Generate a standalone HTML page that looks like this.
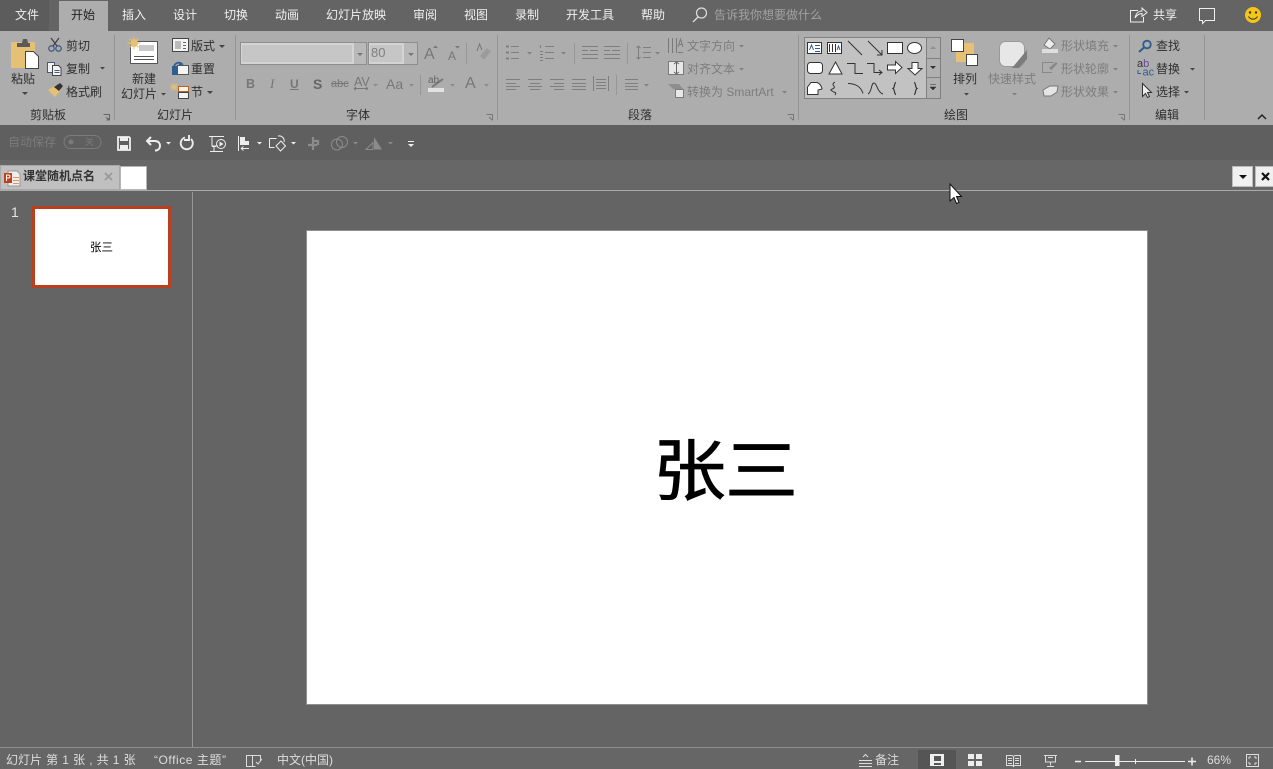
<!DOCTYPE html>
<html lang="zh-CN"><head><meta charset="utf-8"><title>PowerPoint</title>
<style>
html,body{margin:0;padding:0;width:1273px;height:769px;overflow:hidden;background:#646464}
body{position:relative;font-family:"Liberation Sans","Noto Sans CJK SC",sans-serif;font-size:12px;color:#2b2b2b}
div{position:absolute}
span.t{position:absolute;z-index:2}
.t{white-space:nowrap;line-height:16px;font-family:"Noto Sans CJK SC","Liberation Sans",sans-serif;font-size:12px}
.w{color:#f0f0f0}.g{color:#7d7d7d}.d{color:#2f2f2f}.q{color:#808080}
.s{font-family:"Liberation Sans","Noto Sans CJK SC",sans-serif;color:#ddd}
svg{position:absolute;left:0;top:0;z-index:1}
</style></head><body>
<div style="left:0;top:0;width:1273px;height:31px;background:#646464"></div>
<div style="left:0;top:0;width:49px;height:31px;background:#5c5c5c"></div>
<div style="left:59px;top:1px;width:49px;height:30px;background:#adadad"></div>
<div style="left:0;top:31px;width:1273px;height:94px;background:#adadad"></div>
<div style="left:0;top:125px;width:1273px;height:35px;background:#5f5f5f"></div>
<div style="left:0;top:160px;width:1273px;height:30px;background:#676767"></div>
<div style="left:0;top:190px;width:1273px;height:1px;background:#aaa"></div>
<div style="left:192px;top:192px;width:1px;height:555px;background:#969696"></div>
<div style="left:0;top:747px;width:1273px;height:1px;background:#8d8d8d"></div>
<div style="left:0;top:748px;width:1273px;height:21px;background:#666"></div>
<div style="left:918px;top:750px;width:38px;height:19px;background:#555"></div>

<!-- slide -->
<div style="left:307px;top:231px;width:840px;height:473px;background:#fff;outline:1px solid #8f8f8f"></div>
<span class="t" style="left:653px;top:422px;font-size:73px;line-height:88px;color:#000;font-weight:400;letter-spacing:-1px;-webkit-text-stroke:.8px #000;transform:scaleY(.92);transform-origin:50% 50%">张三</span>
<!-- thumbnail -->
<div style="left:32px;top:206px;width:133px;height:76px;background:#fff;border:3px solid #b8401f"></div>
<span class="t" style="left:90px;top:239px;font-size:11.5px;color:#000">张三</span>
<span class="t w" style="left:11px;top:204px;font-size:14px;color:#e6e6e6;font-family:'Liberation Sans'">1</span>

<!-- tab labels -->
<span class="t w" style="left:15px;top:7px">文件</span>
<span class="t" style="left:71px;top:7px;color:#222">开始</span>
<span class="t w" style="left:122px;top:7px">插入</span>
<span class="t w" style="left:173px;top:7px">设计</span>
<span class="t w" style="left:224px;top:7px">切换</span>
<span class="t w" style="left:275px;top:7px">动画</span>
<span class="t w" style="left:326px;top:7px">幻灯片放映</span>
<span class="t w" style="left:413px;top:7px">审阅</span>
<span class="t w" style="left:464px;top:7px">视图</span>
<span class="t w" style="left:515px;top:7px">录制</span>
<span class="t w" style="left:566px;top:7px">开发工具</span>
<span class="t w" style="left:641px;top:7px">帮助</span>
<span class="t" style="left:714px;top:7px;color:#a2a2a2">告诉我你想要做什么</span>
<span class="t w" style="left:1153px;top:7px">共享</span>

<!-- ribbon text -->
<span class="t d" style="left:66px;top:38px">剪切</span>
<span class="t d" style="left:66px;top:61px">复制</span>
<span class="t d" style="left:66px;top:84px">格式刷</span>
<span class="t d" style="left:11px;top:71px">粘贴</span>
<span class="t d" style="left:30px;top:107px">剪贴板</span>
<span class="t d" style="left:132px;top:71px">新建</span>
<span class="t d" style="left:121px;top:86px">幻灯片</span>
<span class="t d" style="left:191px;top:38px">版式</span>
<span class="t d" style="left:191px;top:61px">重置</span>
<span class="t d" style="left:191px;top:84px">节</span>
<span class="t d" style="left:157px;top:107px">幻灯片</span>
<span class="t d" style="left:346px;top:107px">字体</span>
<span class="t d" style="left:628px;top:107px">段落</span>
<span class="t d" style="left:944px;top:107px">绘图</span>
<span class="t d" style="left:1155px;top:107px">编辑</span>
<span class="t g" style="left:687px;top:38px">文字方向</span>
<span class="t g" style="left:687px;top:61px">对齐文本</span>
<span class="t g" style="left:687px;top:84px;font-family:'Liberation Sans','Noto Sans CJK SC',sans-serif">转换为 SmartArt</span>
<span class="t d" style="left:953px;top:71px">排列</span>
<span class="t g" style="left:988px;top:71px">快速样式</span>
<span class="t g" style="left:1061px;top:38px">形状填充</span>
<span class="t g" style="left:1061px;top:61px">形状轮廓</span>
<span class="t g" style="left:1061px;top:84px">形状效果</span>
<span class="t d" style="left:1156px;top:38px">查找</span>
<span class="t d" style="left:1156px;top:61px">替换</span>
<span class="t d" style="left:1156px;top:84px">选择</span>
<span class="t q" style="left:371px;top:45px;font-size:13px;font-family:'Liberation Sans'">80</span>
<span class="t" style="left:246px;top:76px;font:bold 12.500px/16px 'Liberation Sans';color:#777">B</span>
<span class="t" style="left:270px;top:76px;font:italic 13px/16px 'Liberation Serif';color:#777">I</span>
<span class="t" style="left:290px;top:76px;font:bold 12px/16px 'Liberation Sans';color:#777;text-decoration:underline">U</span>
<span class="t" style="left:313px;top:76px;font:bold 14px/16px 'Liberation Sans';color:#666">S</span>
<span class="t" style="left:331px;top:76px;font:11px/16px 'Liberation Sans';color:#777;text-decoration:line-through">abc</span>
<span class="t" style="left:354px;top:74px;font:12.500px/16px 'Liberation Sans';color:#777">AV</span>
<span class="t" style="left:386px;top:76px;font:14px/16px 'Liberation Sans';color:#777">Aa</span>
<span class="t" style="left:424px;top:46px;font:16px/18px 'Liberation Sans';color:#777">A</span>
<span class="t" style="left:448px;top:47px;font:12px/18px 'Liberation Sans';color:#777">A</span>
<span class="t" style="left:465px;top:75px;font:16px/18px 'Liberation Sans';color:#777">A</span>
<span class="t" style="left:428px;top:74px;font:10px/14px 'Liberation Sans';color:#666">ab</span>

<!-- QAT text -->
<span class="t" style="left:8px;top:134px;color:#7b7b7b">自动保存</span>
<span class="t" style="left:85px;top:136px;font-size:9px;line-height:12px;color:#7b7b7b">关</span>
<span class="t" style="left:23px;top:168px;color:#333;font-weight:700">课堂随机点名</span>

<!-- status -->
<span class="t s" style="left:6px;top:752px;word-spacing:.8px">幻灯片 第 1 张 , 共 1 张</span>
<span class="t s" style="left:154px;top:752px;letter-spacing:.55px">“Office 主题”</span>
<span class="t s" style="left:277px;top:752px">中文(中国)</span>
<span class="t s" style="left:875px;top:752px">备注</span>
<span class="t s" style="left:1207px;top:752px">66%</span>

<svg width="1273" height="769" viewBox="0 0 1273 769" fill="none">
<!-- tell me search -->
<circle cx="701.500" cy="13" r="5" stroke="#ddd" stroke-width="1.200"/><path d="M698 17l-5 5" stroke="#ddd" stroke-width="1.300"/>
<!-- share -->
<path d="M1138 10.500h-7.500v11.500h13v-5M1135 18c1-5 4-7 7-7V8l5 4.500-5 4v-3c-3 0-5 1.500-7 4.500z" stroke="#eee"/>
<!-- comment -->
<path d="M1199.500 8.500h15v12h-9l-3 3v-3h-3z" stroke="#eee"/>
<!-- smiley -->
<circle cx="1253" cy="15" r="8" fill="#f5c518"/><circle cx="1250" cy="12.500" r="1.200" fill="#333"/><circle cx="1256" cy="12.500" r="1.200" fill="#333"/><path d="M1248.500 16.500c2 3.500 7 3.500 9 0" stroke="#333"/>

<!-- separators -->
<path d="M114.500 35v85M235.500 35v85M497.500 35v85M798.500 35v85M1129.500 35v85M1204.500 35v85" stroke="#949494"/>
<path d="M466.500 43v21M420.500 75v20M574.500 43v21M627.500 43v21M616.500 75v20" stroke="#979797"/>

<!-- paste -->
<rect x="11" y="42" width="24" height="26" fill="#e5c075"/>
<path d="M17 47v-4h5l1-4h4l1 4h2v4z" fill="#5a5a5a"/>
<path d="M25.500 51.500h8l5 5v12h-13z" fill="#fff" stroke="#444"/>
<path d="M22 92l3 3 3-3z" fill="#444"/>
<!-- scissors -->
<circle cx="51.500" cy="48.500" r="2.700" stroke="#3d5d85" stroke-width="1.300"/><circle cx="58.500" cy="48.500" r="2.700" stroke="#3d5d85" stroke-width="1.300"/><path d="M53 46l6-8M57 46l-6-8" stroke="#444" stroke-width="1.300"/>
<!-- copy -->
<path d="M47.500 62.500h7v10h-7z" fill="#f3f3f3" stroke="#3d5d85"/><path d="M52.500 65.500h6l2.500 2.500v7.500h-8.500z" fill="#f3f3f3" stroke="#444"/><path d="M54.500 70.500h5M54.500 72.500h5" stroke="#3d5d85"/>
<path d="M100 67l2.500 2.500 2.500-2.500z" fill="#444"/>
<!-- brush -->
<path d="M48 90l8-5 5 5-6 7z" fill="#e5c075"/><path d="M54 87l6-4 3 3-4 5z" fill="#333"/>
<!-- dialog launchers -->
<path d="M103.500 114.500h6v6M106 117l3 3M108.500 118v2h-2" stroke="#666"/>
<path d="M486.500 114.500h6v6M489 117l3 3" stroke="#777"/>
<path d="M787.500 114.500h6v6M790 117l3 3" stroke="#777"/>
<path d="M1118.500 114.500h6v6M1121 117l3 3" stroke="#777"/>

<!-- new slide -->
<rect x="130.500" y="41.500" width="27" height="22" fill="#fff" stroke="#555"/>
<rect x="139" y="45" width="15" height="6" fill="#c9c9c9"/><path d="M134 56.500h20M134 59.500h20" stroke="#555"/>
<circle cx="134" cy="43" r="4" fill="#e5c075"/><path d="M134 36.500v13M127.500 43h13M129.500 38.500l9 9M138.500 38.500l-9 9" stroke="#e5c075"/>
<path d="M161 93l2.500 2.500 2.500-2.500z" fill="#444"/>
<!-- layout -->
<rect x="172.500" y="38.500" width="16" height="13" fill="#f4f4f4" stroke="#444"/><rect x="175" y="41" width="6" height="8" fill="#bbb"/><path d="M183 42.500h3M183 45.500h3M183 48.500h3" stroke="#666"/>
<path d="M219 45l3 3 3-3z" fill="#444"/>
<!-- reset -->
<rect x="177.500" y="65.500" width="11" height="9" fill="#f4f4f4" stroke="#555"/><rect x="172" y="66" width="6" height="9" fill="#2f5d8e"/><path d="M174 66c2-4 6-4 8-2l-3 1" stroke="#2f5d8e" stroke-width="1.800"/>
<!-- section -->
<rect x="178.500" y="86.500" width="10" height="5" fill="#f4f4f4" stroke="#b8601f"/><rect x="178.500" y="92.500" width="10" height="6" fill="#f4f4f4" stroke="#444"/><path d="M174 83v8M170 87h8M171 84l6 6M177 84l-6 6" stroke="#e5c075"/>
<path d="M207 91l3 3 3-3z" fill="#444"/>

<!-- font boxes -->
<rect x="240.500" y="42.500" width="126" height="22" fill="#b9b9b9" stroke="#8e8e8e"/>
<rect x="241" y="43" width="113" height="21" fill="#d4d4d4"/>
<rect x="242" y="45" width="110" height="17" fill="#c6c6c6"/>
<path d="M357 53l3 3 3-3z" fill="#777"/>
<rect x="368.500" y="42.500" width="49" height="22" fill="#b9b9b9" stroke="#8e8e8e"/>
<rect x="369" y="43" width="35" height="21" fill="#d4d4d4"/>
<rect x="370" y="45" width="32" height="17" fill="#c6c6c6"/>
<path d="M408 53l3 3 3-3z" fill="#777"/>
<path d="M433 48l2.500-2.500 2.500 2.500zM455 46h5l-2.500 2.500z" fill="#777"/>
<!-- clear format -->
<path d="M480 56l7-8 4 3.500-7 8z" fill="#9b9b9b"/><path d="M477 51l2.500-7 2.500 6" stroke="#777"/>
<path d="M373 84l2.500 2.500 2.500-2.500zM409 84l2.500 2.500 2.500-2.500z" fill="#8a8a8a"/>
<path d="M354 88.500h14M354 88.500l2-1.500M354 88.500l2 1.500M368 88.500l-2-1.500M368 88.500l-2 1.500" stroke="#777"/>
<rect x="428" y="88" width="16" height="4" fill="#e2e2e2"/><path d="M432 87l11-8" stroke="#777" stroke-width="2"/>
<path d="M450 84l2.500 2.500 2.500-2.500zM484 84l2.500 2.500 2.500-2.500z" fill="#8a8a8a"/>

<!-- paragraph icons -->
<g stroke="#7f7f7f">
<path d="M511 46.500h8M511 52.500h8M511 58.500h8M545 46.500h9M545 52.500h9M545 58.500h9"/>
<path d="M506 46.500h3M506 52.500h3M506 58.500h3" stroke-width="2"/>
<path d="M540.500 45v3M540 51.500h3M540 54.500h3M540 57.500h3M540 60.500h3"/>
<path d="M582 46.500h16M590 50.500h8M582 54.500h16M582 58.500h16M604 46.500h16M612 50.500h8M604 54.500h16M604 58.500h16"/>
<path d="M582 50.500h6M604 50.500h6"/>
<path d="M643 47.500h8M643 52.500h8M643 57.500h8M638.500 46v13M636.500 48l2-2 2 2M636.500 57l2 2 2-2"/>
<path d="M506 79.500h14M506 83.500h10M506 86.500h14M506 89.500h10"/>
<path d="M528 79.500h14M530 83.500h10M528 86.500h14M530 89.500h10"/>
<path d="M550 79.500h14M554 83.500h10M550 86.500h14M554 89.500h10"/>
<path d="M572 79.500h14M572 83.500h14M572 86.500h14M572 89.500h14"/>
<path d="M593.500 76v15M608.500 76v15M596 79.500h10M596 82.500h10M596 85.500h10M596 88.500h10"/>
<path d="M625 79.500h13M625 83.500h13M625 86.500h13M625 89.500h13"/>
</g>
<path d="M527 52l2.500 2.500 2.500-2.500zM561 52l2.500 2.500 2.500-2.500zM655 52l2.500 2.500 2.500-2.500zM644 84l2.500 2.500 2.500-2.500zM739 45l2.500 2.500 2.500-2.500zM739 68l2.500 2.500 2.500-2.500zM782 91l2.500 2.500 2.500-2.500zM1113 45l2.500 2.500 2.500-2.500zM1113 68l2.500 2.500 2.500-2.500zM1113 91l2.500 2.500 2.500-2.500zM1012 93l2.500 2.500 2.500-2.500z" fill="#808080"/>
<!-- text direction -->
<path d="M668.500 38v15M672.500 38v15M676.500 38v15" stroke="#7a7a7a"/><path d="M678 47l2.500-8 2.500 8M679 44.500h3M678 52.500h5" stroke="#7a7a7a"/>
<rect x="668.500" y="61.500" width="15" height="13" fill="#e8e8e8" stroke="#7a7a7a"/><path d="M676.500 62v12M674 64l2.500-2 2.500 2M674 72l2.500 2 2.500-2" stroke="#666"/>
<path d="M668 84h11l4 5h-10z" fill="#8e8e8e"/><rect x="675.500" y="89.500" width="8" height="8" fill="#e8e8e8" stroke="#7a7a7a"/>

<!-- shape gallery -->
<rect x="804.500" y="37.500" width="136" height="61" fill="#c2c2c2" stroke="#808080"/>
<rect x="927" y="38" width="13" height="60" fill="#b0b0b0"/>
<path d="M926.500 38v60M927 58.500h13M927 77.500h13" stroke="#808080"/>
<path d="M930 49l3-3 3 3z" fill="#8f8f8f"/><path d="M930 66l3 3 3-3z" fill="#333"/><path d="M930 84.500h6M930 87l3 3 3-3z" fill="#333" stroke="#333" stroke-width=".5"/>
<g stroke="#333" fill="#fff">
<rect x="807.500" y="42.500" width="14" height="11"/><rect x="827.500" y="42.500" width="14" height="11"/>
<rect x="887.500" y="42.500" width="15" height="11"/><ellipse cx="914.500" cy="48" rx="7" ry="5.500"/>
<rect x="807.500" y="62.500" width="15" height="11" rx="3"/><path d="M835.500 62l6.500 12h-13z"/>
<path d="M887.500 65h8v-3.500l6.500 6-6.500 6V70h-8z"/><path d="M912 62.500h6v6h4l-7 6.500-7-6.500h4z"/>
<path d="M811 82.500h6c3 1 4.500 4 5 6.500l-4 1v4.500H807.500V87z"/>
</g>
<g stroke="#333">
<path d="M848 41l14 14M868 41l14 14M882 50v5h-5"/>
<path d="M847 63.500h8v10h8M867 63.500h7v9h8M879 70l3 2.500-3 2.500"/>
<path d="M835 82c-5 3 1 4-1 6s-5 1-2 3 5 1 3 4"/>
<path d="M848 83.500c7 0 13 3 15 10M868 94c4-2 3-11 6-11s3 9 9 11"/>
<path d="M896 82.500c-2 0-1 5-3 6 2 1 1 6 3 6M914 82.500c2 0 1 5 3 6-2 1-1 6-3 6" stroke-width="1.200"/>
</g>
<path d="M809.500 50l2-5 2 5M815 45.500h5M815 48.500h5M815 51.500h5" stroke="#2f5d8e"/>
<path d="M829.500 44v8M832.500 44v8M835.500 44v8" stroke="#333"/><path d="M837 50l1.500-4 1.500 4" stroke="#2f5d8e"/>

<!-- arrange -->
<rect x="956" y="43" width="18" height="19" fill="#e5c075"/>
<rect x="951.500" y="39.500" width="12" height="12" fill="#fff" stroke="#444"/>
<rect x="966.500" y="54.500" width="11" height="11" fill="#fff" stroke="#444"/>
<path d="M964 93l2.500 2.500 2.500-2.500z" fill="#444"/>
<!-- quick styles -->
<rect x="999.500" y="41.500" width="25" height="25" rx="6" fill="#e7e7e7" stroke="#9a9a9a"/>
<path d="M1012 68l15-18v9l-8 9z" fill="#7c7c7c"/>
<!-- fill outline effects -->
<path d="M1044 45l5-7 6 6-5 5z" fill="#eee" stroke="#777"/><rect x="1042" y="49" width="16" height="4" fill="#dedede"/>
<path d="M1052 72.500h-9.500v-10h11" stroke="#888"/><path d="M1049 68l7-6 1.500 1.500-6 6.500z" fill="#888"/>
<path d="M1043 90l7-4h8l-1 6-6 4h-7z" fill="#e5e5e5" stroke="#777"/>

<!-- find replace select -->
<circle cx="1147" cy="44.500" r="3.800" stroke="#2f5d8e" stroke-width="1.800"/><path d="M1144 47.500l-5 4.500" stroke="#2f5d8e" stroke-width="2"/>
<text x="1137" y="67" font-family="Liberation Sans" font-size="11" fill="#333">a<tspan fill="#6a4a98">b</tspan></text>
<text x="1142.500" y="75.500" font-family="Liberation Sans" font-size="11" fill="#2f5d8e">ac</text>
<path d="M1138 70v3.500h3" stroke="#2f5d8e"/>
<path d="M1142.500 83.500v13l3-3 2 4 2-1-2-4h4z" fill="#eee" stroke="#333"/>
<path d="M1190 68l2.500 2.500 2.500-2.500zM1184 91l2.500 2.500 2.500-2.500z" fill="#444"/>
<path d="M1258 119l4-4 4 4" stroke="#222" stroke-width="1.500"/>

<!-- QAT -->
<rect x="64" y="135.500" width="37" height="13" rx="6.500" stroke="#7b7b7b"/><circle cx="71" cy="142" r="2.500" fill="#7b7b7b"/>
<path d="M118 137h11l1 1v12h-12z" stroke="#eee" stroke-width="1.800"/><rect x="120" y="137" width="8" height="4" fill="#eee"/><rect x="120" y="145" width="8" height="5" fill="#eee"/>
<path d="M147 141h8c4 0 5 3 5 4.500 0 3-2 5-5 5M151 137l-4 4 4 4" stroke="#eee" stroke-width="2"/>
<path d="M166 142l2.500 2.500 2.500-2.500z" fill="#eee"/>
<path d="M185 137.500a6 6 0 1 0 6 1.500M189 135v5h-5" stroke="#eee" stroke-width="1.900"/>
<path d="M209 136.500h15M212 137v9h6M212 146.500h4M214 147v4M210 151.500h13" stroke="#eee"/><circle cx="221" cy="144" r="4.500" stroke="#eee"/><path d="M219.500 141.500l4 2.500-4 2.500z" fill="#eee"/>
<path d="M238.500 136v15" stroke="#eee"/><rect x="240" y="137" width="5" height="4" fill="#eee"/><rect x="240" y="141" width="9" height="4" fill="#eee"/><path d="M241 148.500h8M241 148.500l2.500-2M241 148.500l2.500 2" stroke="#eee"/>
<path d="M257 142l2.500 2.500 2.500-2.500z" fill="#eee"/>
<path d="M269.500 138.500h7M269.500 138.500v9h5M278 136c4-1 7 3 6 6M281 141l-5 5 4.500 5 5-5z" stroke="#eee"/>
<path d="M291 142l2.500 2.500 2.500-2.500z" fill="#eee"/>
<path d="M313 137v13M308 145h9M317 141h-5M318 140v5" stroke="#8b8b8b" stroke-width="2.200"/>
<circle cx="337" cy="144.500" r="5.500" stroke="#8b8b8b"/><circle cx="342" cy="142" r="5.500" stroke="#8b8b8b"/>
<path d="M353 142l2.500 2.500 2.500-2.500zM388 142l2.500 2.500 2.500-2.500z" fill="#8b8b8b"/>
<path d="M366 149.500l7-7v7z" stroke="#8b8b8b"/><path d="M374 137l8 12.500h-8z" fill="#8b8b8b"/>
<path d="M408 141.500h6" stroke="#eee"/><path d="M408 144l3 3 3-3z" fill="#eee"/>

<!-- doc tab -->
<rect x="0.500" y="165.500" width="119" height="24" fill="#c0c0c0" stroke="#a8a8a8"/>
<rect x="120.500" y="166.500" width="26" height="23" fill="#fff" stroke="#b5b5b5"/>
<path d="M8 171h9l3 3v12H8z" fill="#eee" stroke="#999"/>
<rect x="4" y="173" width="8" height="10" fill="#c43e1c"/>
<path d="M6.500 181v-6h2a1.500 1.500 0 0 1 0 3h-2" stroke="#fff"/>
<path d="M13 177.500h6M13 180.500h6M13 183.500h6" stroke="#e5916a"/>
<path d="M105 173l7 7M112 173l-7 7" stroke="#999" stroke-width="1.800"/>
<!-- doc buttons -->
<rect x="1232.500" y="166.500" width="20" height="20" fill="#f0f0f0" stroke="#bbb"/>
<path d="M1239 175h8l-4 4z" fill="#111"/>
<rect x="1255.500" y="166.500" width="18" height="20" fill="#f0f0f0" stroke="#bbb"/>
<path d="M1262 173l7 7M1269 173l-7 7" stroke="#111" stroke-width="2.200"/>

<!-- cursor -->
<path d="M950 184v17l4-3.500 2.500 6 2.500-1-2.500-6h5z" fill="#fff" stroke="#111"/>

<!-- status icons -->
<path d="M246.500 755.500h6v11h-6zM252.500 755.500h8v6M252.500 766.500h3M256 762l2 2 4-5" stroke="#ddd"/>
<path d="M859 760.500h13M859 763.500h13M859 766.500h13M863 757l2.500-2.500 2.500 2.500" stroke="#ddd"/>
<rect x="930" y="754" width="14" height="12" fill="#eee"/><rect x="934" y="756" width="7" height="5" fill="#555"/><rect x="934" y="763" width="7" height="2" fill="#555"/>
<path d="M968 754h6v5h-6zM976 754h6v5h-6zM968 761h6v5h-6zM976 761h6v5h-6z" fill="#eee"/>
<path d="M1006.500 755.500h5.500l1.500 1 1.500-1h5.500v10h-6l-1 1-1-1h-6zM1013.500 756v10M1008 758.500h4M1008 760.500h4M1008 763.500h4M1015 758.500h4M1015 760.500h4M1015 763.500h4" stroke="#ddd"/>
<path d="M1044 755.500h13M1045.500 756v6h10v-6M1050.500 762v3.500M1047 766.500h7M1048 757.500h5" stroke="#ddd"/>
<path d="M1085 761.500h100M1135.500 759v5" stroke="#eee"/>
<path d="M1075 761.500h6M1188 761.500h8M1192 757.500v8" stroke="#eee" stroke-width="1.500"/>
<rect x="1115" y="755" width="4.500" height="11" fill="#eee"/>
<rect x="1246.500" y="754.500" width="12" height="12" stroke="#ddd"/><path d="M1249 757h2M1249 757v2M1256 757h-2M1256 757v2M1249 764h2M1249 764v-2M1256 764h-2M1256 764v-2" stroke="#ddd"/>
</svg>
</body></html>
